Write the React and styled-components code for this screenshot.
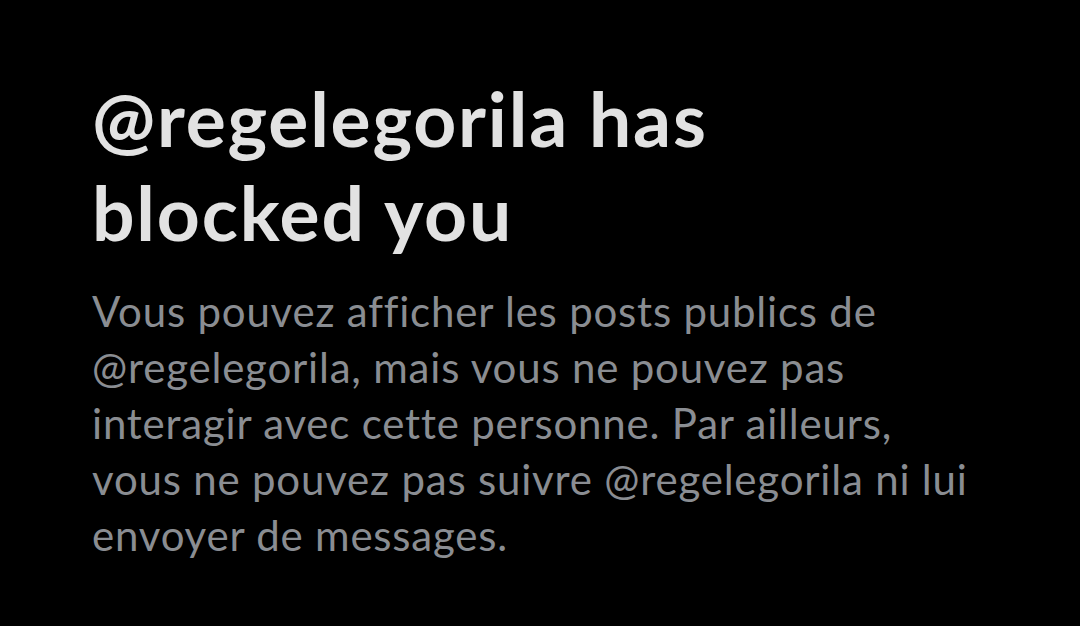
import styled, { createGlobalStyle } from 'styled-components'

const Global = createGlobalStyle`
    html, body {
        margin: 0;
        padding: 0;
        background: #000;
    }
`

const BlockedNotice = () => {
    return (
        <S.Page>
            <Global />
            <S.Notice>
                <S.Title>@regelegorila has blocked you</S.Title>
                <S.Desc>
                    Vous pouvez afficher les posts publics de @regelegorila, mais vous
                    ne pouvez pas interagir avec cette personne. Par ailleurs, vous ne
                    pouvez pas suivre @regelegorila ni lui envoyer de messages.
                </S.Desc>
            </S.Notice>
        </S.Page>
    )
}

export default BlockedNotice

const S = {}

S.Page = styled.div`
    width: 1080px;
    height: 626px;
    background: #000;
    overflow: hidden;
`
S.Notice = styled.div`
    display: flex;
    flex-direction: column;
    gap: 24px;
    padding: 71px 0 0 92px;
    width: 886px;
`
S.Title = styled.h1`
    margin: 0;
    font-family: Lato, 'Noto Sans', sans-serif;
    font-weight: 700;
    font-size: 75px;
    line-height: 94px;
    letter-spacing: 1.8px;
    color: #e2e2e2;
    width: 720px;
`
S.Desc = styled.p`
    margin: 0;
    font-family: Lato, 'Noto Sans', sans-serif;
    font-size: 42px;
    line-height: 56px;
    letter-spacing: 0.8px;
    color: #8a8d92;
`
